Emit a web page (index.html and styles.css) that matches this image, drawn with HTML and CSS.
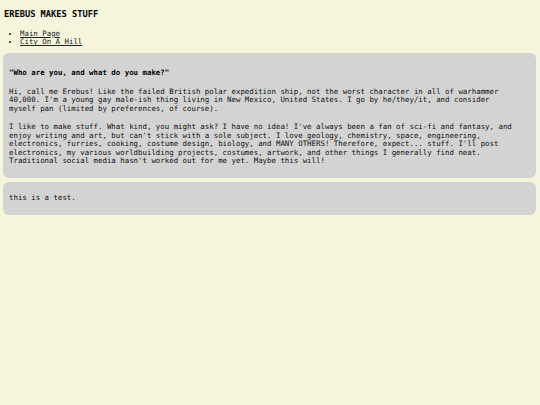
FILE: index.html
```html
<!DOCTYPE html>
<html lang="en">
<head>
<meta charset="utf-8">
<title>Erebus Makes Stuff</title>
<link rel="stylesheet" href="styles.css">
</head>
<body>
<h1 class="title">EREBUS MAKES STUFF</h1>
<ul class="nav">
  <li><a href="#">Main Page</a></li>
  <li><a href="#">City On A Hill</a></li>
</ul>
<div class="card">
  <p class="lead">"Who are you, and what do you make?"</p>
  <p>Hi, call me Erebus! Like the failed British polar expedition ship, not the worst character in all of warhammer 40,000. I'm a young gay male-ish thing living in New Mexico, United States. I go by he/they/it, and consider myself pan (limited by preferences, of course).</p>
  <p>I like to make stuff. What kind, you might ask? I have no idea! I've always been a fan of sci-fi and fantasy, and enjoy writing and art, but can't stick with a sole subject. I love geology, chemistry, space, engineering, electronics, furries, cooking, costume design, biology, and MANY OTHERS! Therefore, expect... stuff. I'll post electronics, my various worldbuilding projects, costumes, artwork, and other things I generally find neat. Traditional social media hasn't worked out for me yet. Maybe this will!</p>
</div>
<div class="card card-next">
  <p>this is a test.</p>
</div>
</body>
</html>
```
FILE: styles.css
```css
html, body {
  margin: 0;
  padding: 0;
  background: #f5f5dc;
}
body {
  font-family: "DejaVu Sans Mono", "Liberation Mono", monospace;
  font-size: 7.4px;
  line-height: 8.5px;
  color: #111;
}
.title {
  margin: 9px 0 0 4px;
  font-size: 8.7px;
  line-height: 10px;
  font-weight: bold;
  color: #000;
}
.nav {
  margin: 10.75px 0 0 4px;
  padding-left: 16px;
}
.nav a {
  color: #222;
  text-decoration: underline;
}
.card {
  margin: 6.25px 4px 0 3px;
  padding: 2.25px 19px 2.25px 6px;
  background: #d3d3d3;
  border-radius: 6px;
}
.card-next {
  margin-top: 3.75px;
}
.card p {
  margin: 10px 0;
}
.card .lead {
  margin-top: 13.75px;
  font-weight: bold;
  color: #000;
}
```
